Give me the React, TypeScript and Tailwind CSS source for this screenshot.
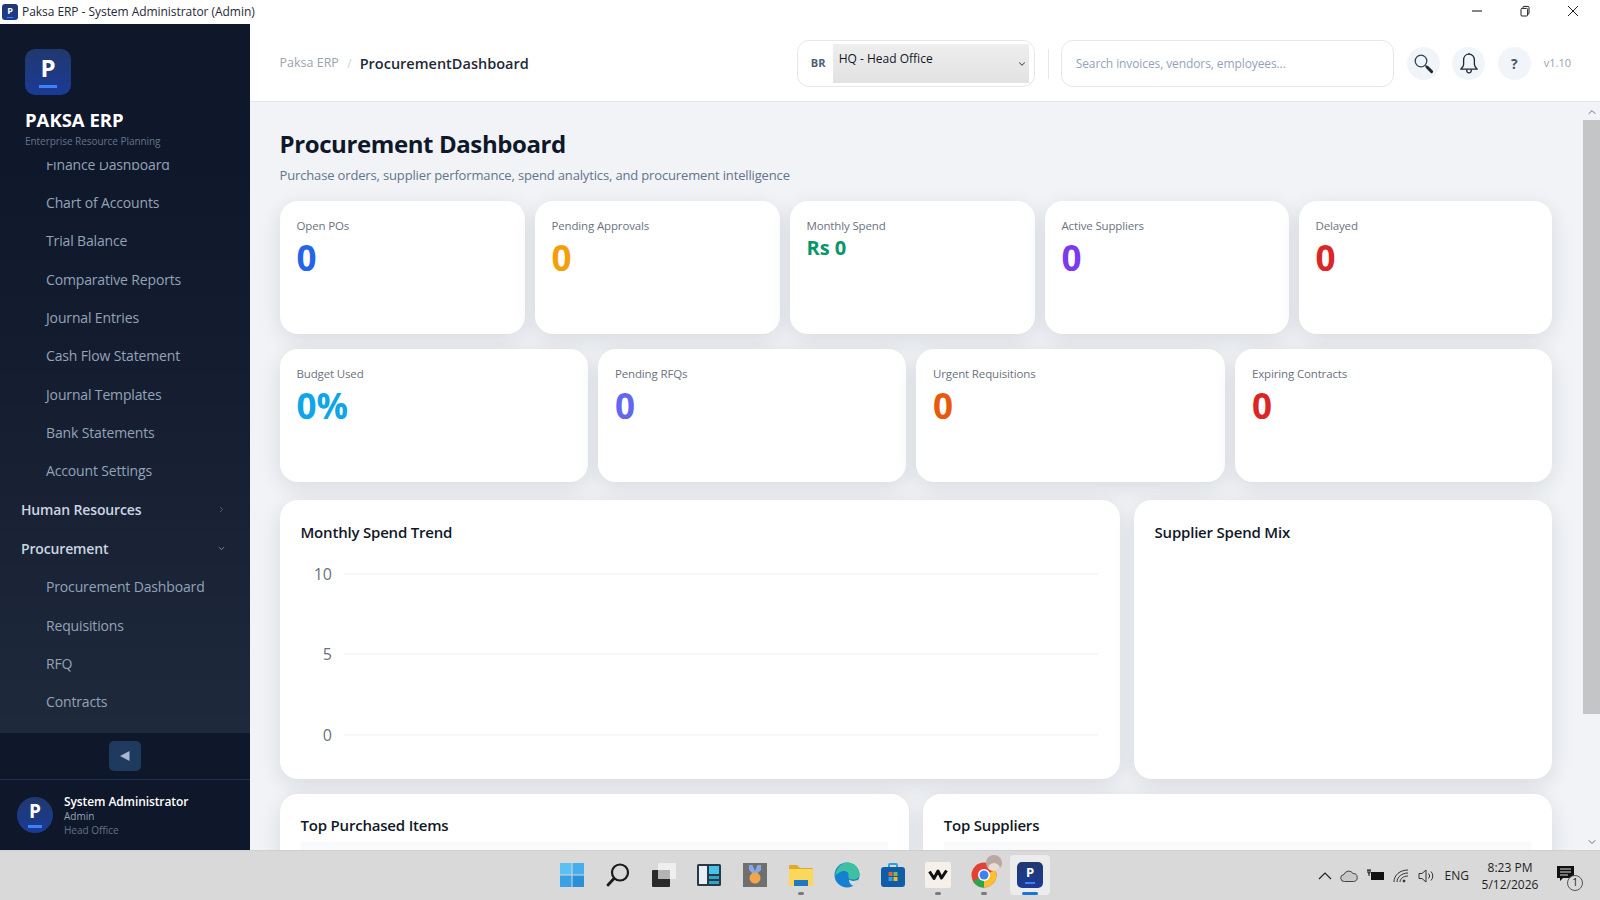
import React from 'react';
import { ChevronDown, ChevronRight, ChevronUp } from 'lucide-react';

interface Kpi {
  label: string;
  value: string;
  color: string;
}

const topKpis: Kpi[] = [
  { label: 'Open POs', value: '0', color: 'text-[#2563eb]' },
  { label: 'Pending Approvals', value: '0', color: 'text-[#f59e0b]' },
  { label: 'Monthly Spend', value: 'Rs 0', color: 'text-[#059669]' },
  { label: 'Active Suppliers', value: '0', color: 'text-[#7c3aed]' },
  { label: 'Delayed', value: '0', color: 'text-[#dc2626]' },
];

const lowerKpis: Kpi[] = [
  { label: 'Budget Used', value: '0%', color: 'text-[#0ea5e9]' },
  { label: 'Pending RFQs', value: '0', color: 'text-[#6366f1]' },
  { label: 'Urgent Requisitions', value: '0', color: 'text-[#ea580c]' },
  { label: 'Expiring Contracts', value: '0', color: 'text-[#dc2626]' },
];

const financeItems = [
  'Finance Dashboard',
  'Chart of Accounts',
  'Trial Balance',
  'Comparative Reports',
  'Journal Entries',
  'Cash Flow Statement',
  'Journal Templates',
  'Bank Statements',
  'Account Settings',
];

const procurementItems = ['Procurement Dashboard', 'Requisitions', 'RFQ', 'Contracts'];

const cardClass = 'rounded-[18px] bg-white shadow-[0_6px_22px_rgba(15,23,42,0.11)]';
const headingClass = 'text-[15px] leading-[24px] font-semibold tracking-[-0.2px] text-[#111827]';

function PaksaMark({ className, text }: { className: string; text: string }) {
  return (
    <div className={`flex flex-col items-center justify-center bg-linear-to-b from-[#21386f] to-[#1b3a96] ${className}`}>
      <span className={`font-bold leading-none text-white ${text}`}>P</span>
      <span className="mt-[10%] h-[7%] w-[38%] bg-[#3b82f6]" />
    </div>
  );
}

function NavItem({ label }: { label: string }) {
  return (
    <div className="flex h-[38.3px] shrink-0 items-center pl-[46px] text-[14px] tracking-[-0.15px] whitespace-nowrap text-[#94a3b8]">
      {label}
    </div>
  );
}

function NavGroup({ label, open }: { label: string; open?: boolean }) {
  return (
    <div className="flex h-[39px] shrink-0 items-center justify-between pr-[24px] pl-[21px] text-[14px] font-semibold tracking-[-0.15px] text-[#cbd5e1]">
      <span>{label}</span>
      {open ? <ChevronDown size={9} className="text-[#94a3b8]" /> : <ChevronRight size={9} className="text-[#64748b]" />}
    </div>
  );
}

function Sidebar() {
  return (
    <aside className="flex w-[250px] shrink-0 flex-col bg-[#0f172a]">
      <div className="shrink-0 pt-[25px] pb-[12px] pl-[25px]">
        <PaksaMark className="h-[46px] w-[46px] rounded-[10px]" text="text-[24px]" />
        <div className="mt-[13px] text-[18.5px] leading-[24px] font-bold text-white">PAKSA ERP</div>
        <div className="h-[18px] text-[10px] leading-[18px] tracking-[-0.05px] text-[#64748b]">Enterprise Resource Planning</div>
      </div>
      <nav className="flex min-h-0 flex-1 flex-col justify-end overflow-hidden bg-linear-to-b from-[#0f172a] to-[#1e293b] pb-[12px]">
        {financeItems.map((item) => (
          <NavItem key={item} label={item} />
        ))}
        <NavGroup label="Human Resources" />
        <NavGroup label="Procurement" open />
        {procurementItems.map((item) => (
          <NavItem key={item} label={item} />
        ))}
      </nav>
      <div className="flex h-[47px] shrink-0 items-center justify-center border-b border-[#1e2f55]">
        <div className="flex h-[30px] w-[32px] items-center justify-center rounded-[5px] bg-[#1e3a5f]">
          <svg width="12" height="12" viewBox="0 0 12 12">
            <path d="M10.5 1v10L1 6z" fill="#a9b8d0" />
          </svg>
        </div>
      </div>
      <div className="flex h-[70px] shrink-0 items-center gap-[11px] pl-[17px]">
        <PaksaMark className="h-9 w-9 rounded-full" text="text-[19px]" />
        <div className="flex flex-col">
          <span className="text-[12px] leading-[15px] font-semibold tracking-[-0.1px] text-white">System Administrator</span>
          <span className="text-[10px] leading-[14px] text-[#94a3b8]">Admin</span>
          <span className="text-[10px] leading-[14px] text-[#64748b]">Head Office</span>
        </div>
      </div>
    </aside>
  );
}

function SearchGlyph() {
  return (
    <svg width="21" height="21" viewBox="0 0 21 21" fill="none">
      <circle cx="8" cy="8" r="5.8" stroke="#374151" strokeWidth="1.3" fill="#eef4f8" />
      <path d="M12.4 12.4l1.4 1.4" stroke="#374151" strokeWidth="1.3" />
      <path d="M14 14l4.6 4.6" stroke="#1f2937" strokeWidth="3" strokeLinecap="round" />
    </svg>
  );
}

function BellGlyph() {
  return (
    <svg width="20" height="23" viewBox="0 0 20 23" fill="none" stroke="#1f2937" strokeWidth="1.3" strokeLinejoin="round">
      <path d="M10 2.2c-3.4 0-5.4 2.6-5.4 6v4.3c0 1.7-1.3 3.2-2.8 4.7h16.4c-1.5-1.5-2.8-3-2.8-4.7V8.2c0-3.4-2-6-5.4-6z" />
      <path d="M10 1v1.2M7.6 17.5c0 1.9 1 3.4 2.4 3.4s2.4-1.5 2.4-3.4" />
    </svg>
  );
}

function TopBar() {
  return (
    <header className="flex h-[78px] shrink-0 items-center border-b border-[#e5e7eb] bg-white pt-[2px] pr-[29px] pl-[29.5px]">
      <span className="text-[12.5px] text-[#9ca3af]">Paksa ERP</span>
      <span className="mx-2 text-[13px] text-[#cbd5e1]">/</span>
      <span className="text-[14.5px] font-semibold text-[#1f2937]">ProcurementDashboard</span>
      <div className="ml-auto flex h-[47px] w-[238px] items-center rounded-xl border border-[#e5e7eb] bg-white pr-[5px] pl-[13px]">
        <span className="w-5 text-[11px] font-bold text-[#4a6078]">BR</span>
        <div className="ml-[2px] flex h-[39px] flex-1 items-start justify-between bg-linear-to-b from-[#eeeeee] to-[#e2e2e2] pr-[2px] pl-[6px]">
          <span className="pt-[6px] text-[12px] text-[#111827]">HQ - Head Office</span>
          <ChevronDown size={10} strokeWidth={2.5} className="mt-[15px] text-[#4b5563]" />
        </div>
      </div>
      <div className="mr-3 ml-[13px] h-[30px] w-px bg-[#e5e7eb]" />
      <div className="flex h-[47px] w-[333px] items-center rounded-xl border border-[#e5e7eb] bg-white pl-[14px] text-[12px] tracking-[-0.1px] text-[#94a3b8]">
        Search invoices, vendors, employees...
      </div>
      <div className="ml-[13px] flex items-center gap-[12.5px]">
        <div className="flex h-[33px] w-[33px] items-center justify-center rounded-full bg-[#f1f5f9]">
          <SearchGlyph />
        </div>
        <div className="flex h-[33px] w-[33px] items-center justify-center rounded-full bg-[#f1f5f9]">
          <BellGlyph />
        </div>
        <div className="flex h-[33px] w-[33px] items-center justify-center rounded-full bg-[#f1f5f9] text-[14px] font-bold text-[#475569]">
          ?
        </div>
      </div>
      <span className="ml-[13px] text-[11px] text-[#94a3b8]">v1.10</span>
    </header>
  );
}

function KpiCard({ kpi }: { kpi: Kpi }) {
  const small = kpi.value.startsWith('Rs');
  return (
    <div className={`${cardClass} h-[133px] px-[17px] pt-[16px]`}>
      <div className="text-[11.5px] leading-[18px] font-medium tracking-[-0.15px] text-[#6b7280]">{kpi.label}</div>
      <div className={small ? `text-[20px] leading-[26px] font-bold ${kpi.color}` : `text-[35px] leading-[46px] font-bold ${kpi.color}`}>
        {kpi.value}
      </div>
    </div>
  );
}

function SpendChart() {
  const ticks = [
    { label: '10', y: 27 },
    { label: '5', y: 107 },
    { label: '0', y: 188 },
  ];
  return (
    <svg width="839" height="215" viewBox="0 0 839 215" className="mt-[3px] block">
      {ticks.map((t) => (
        <g key={t.label}>
          <line x1="64" x2="818" y1={t.y} y2={t.y} stroke="#eef0f2" strokeWidth="1.2" />
          <text x="52" y={t.y + 6} textAnchor="end" fontSize="16" fill="#6b7280">
            {t.label}
          </text>
        </g>
      ))}
    </svg>
  );
}

function Content() {
  return (
    <div className="min-w-0 flex-1 overflow-hidden pr-[31px] pl-[29.5px]">
      <h1 className="mt-[24px] text-[24px] leading-[36px] font-bold tracking-[-0.4px] text-[#0f172a]">Procurement Dashboard</h1>
      <p className="mt-[3px] text-[13px] leading-[20px] tracking-[-0.15px] text-[#64748b]">
        Purchase orders, supplier performance, spend analytics, and procurement intelligence
      </p>
      <div className="mt-4 grid grid-cols-[245px_245px_245px_244px_1fr] gap-[10px]">
        {topKpis.map((kpi) => (
          <KpiCard key={kpi.label} kpi={kpi} />
        ))}
      </div>
      <div className="mt-[15px] grid grid-cols-[308.5px_308px_309px_1fr] gap-[10px]">
        {lowerKpis.map((kpi) => (
          <KpiCard key={kpi.label} kpi={kpi} />
        ))}
      </div>
      <div className="mt-[18px] grid grid-cols-[840px_1fr] gap-[14px]">
        <div className={`${cardClass} h-[279px]`}>
          <h3 className={`px-[21px] pt-[20px] ${headingClass}`}>Monthly Spend Trend</h3>
          <SpendChart />
        </div>
        <div className={`${cardClass} h-[279px]`}>
          <h3 className={`px-[21px] pt-[20px] ${headingClass}`}>Supplier Spend Mix</h3>
        </div>
      </div>
      <div className="mt-[15px] grid grid-cols-2 gap-[14px]">
        {['Top Purchased Items', 'Top Suppliers'].map((title) => (
          <div key={title} className={`${cardClass} h-[200px] px-[21px] pt-[19px]`}>
            <h3 className={headingClass}>{title}</h3>
            <div className="mt-[5px] h-10 bg-[#f8fafc]" />
          </div>
        ))}
      </div>
    </div>
  );
}

function Scrollbar() {
  return (
    <div className="flex w-[17px] shrink-0 flex-col items-center bg-[#f1f3f6]">
      <ChevronUp size={12} className="mt-[3px] h-[14px] shrink-0 text-[#6b7280]" />
      <div className="mt-[1px] h-[594px] w-full bg-[#c4c5c7]" />
      <div className="flex-1" />
      <ChevronDown size={12} className="mb-[1px] h-[14px] shrink-0 text-[#6b7280]" />
    </div>
  );
}

function TitleBar() {
  return (
    <div className="flex h-[24px] shrink-0 items-center bg-white">
      <PaksaMark className="ml-[2px] h-[16px] w-[16px] rounded-[3px]" text="text-[9px]" />
      <span className="ml-[4px] text-[12px] tracking-[-0.05px] text-[#1f2937]">Paksa ERP - System Administrator (Admin)</span>
      <div className="ml-auto flex items-center gap-[36px] pr-[21px] pb-[2px]">
        <svg width="12" height="12" viewBox="0 0 12 12"><path d="M1 6h10" stroke="#222" strokeWidth="1.1" /></svg>
        <svg width="12" height="12" viewBox="0 0 12 12" fill="none">
          <rect x="2" y="3.4" width="6.6" height="7.6" rx="1" stroke="#222" />
          <path d="M4 3.2V2.4a1 1 0 0 1 1-1h4a1 1 0 0 1 1 1v5.8a1 1 0 0 1-1 1h-.4" stroke="#222" />
        </svg>
        <svg width="12" height="12" viewBox="0 0 12 12"><path d="M1 1l10 10M11 1L1 11" stroke="#222" strokeWidth="1" /></svg>
      </div>
    </div>
  );
}

function TaskSlot({ children, dot }: { children: React.ReactNode; dot?: boolean }) {
  return (
    <div className="relative flex h-[40px] w-[40px] items-center justify-center">
      {children}
      {dot && <div className="absolute bottom-0 left-1/2 h-[3px] w-[6px] -translate-x-1/2 rounded-full bg-[#7b7b7b]" />}
    </div>
  );
}

function TaskIcons() {
  return (
    <>
      {/* start */}
      <TaskSlot>
        <svg width="26" height="26" viewBox="0 0 26 26">
          <rect x="1" y="1" width="11.5" height="11.5" fill="#5cc0f2" />
          <rect x="13.5" y="1" width="11.5" height="11.5" fill="#46aeea" />
          <rect x="1" y="13.5" width="11.5" height="11.5" fill="#3aa2e4" />
          <rect x="13.5" y="13.5" width="11.5" height="11.5" fill="#2a90d8" />
        </svg>
      </TaskSlot>
      {/* search */}
      <TaskSlot>
        <svg width="26" height="26" viewBox="0 0 26 26" fill="none">
          <circle cx="15" cy="10.5" r="8" stroke="#1b1b1b" strokeWidth="2.2" />
          <path d="M9 16.5L3 23" stroke="#1b1b1b" strokeWidth="2.8" strokeLinecap="round" />
        </svg>
      </TaskSlot>
      {/* task view */}
      <TaskSlot>
        <svg width="26" height="26" viewBox="0 0 26 26">
          <rect x="7" y="1" width="18" height="16" rx="1" fill="#efefef" />
          <rect x="1" y="8" width="18" height="17" rx="1" fill="#2a2a2a" />
          <rect x="7" y="8" width="12" height="9" fill="#b4b4b4" />
        </svg>
      </TaskSlot>
      {/* widgets */}
      <TaskSlot>
        <svg width="26" height="26" viewBox="0 0 26 26">
          <rect x="1" y="2" width="24" height="22" rx="1.5" fill="#28394a" />
          <rect x="3" y="4" width="8" height="18" fill="#e8eef2" />
          <rect x="13" y="4" width="10" height="8" fill="#45c4ea" />
          <rect x="13" y="14" width="10" height="3" fill="#2fa5c9" />
          <rect x="13" y="19" width="10" height="3" fill="#2fa5c9" />
        </svg>
      </TaskSlot>
      {/* medal */}
      <TaskSlot>
        <svg width="26" height="26" viewBox="0 0 26 26">
          <rect x="1" y="1" width="24" height="24" fill="#6f6f6f" />
          <path d="M7 3h3.5l2.5 6 2.5-6H19v5l-6 6-6-6z" fill="#86a9e6" />
          <circle cx="13" cy="16" r="5.5" fill="#f2a54a" />
        </svg>
      </TaskSlot>
      {/* explorer */}
      <TaskSlot dot>
        <svg width="26" height="26" viewBox="0 0 26 26">
          <path d="M1 4a1 1 0 0 1 1-1h7l3 3h12a1 1 0 0 1 1 1v16a1 1 0 0 1-1 1H2a1 1 0 0 1-1-1z" fill="#e0a92a" />
          <rect x="1" y="7" width="24" height="17" fill="#fbd75a" />
          <rect x="6" y="18" width="14" height="6" fill="#1f78c4" />
        </svg>
      </TaskSlot>
      {/* edge */}
      <TaskSlot>
        <svg width="26" height="26" viewBox="0 0 26 26">
          <circle cx="13" cy="13" r="12.5" fill="#1580cf" />
          <path d="M1 14C2 6 8 .5 13.5 .5 20 .5 25.5 6 25.5 12.5c0 3.5-3 5-6.5 5-3 0-5-1-4.500-3.500C15.500 10 11 8 7.500 9.500 5 10.500 2.500 12 1 14z" fill="#3cc2a0" />
          <path d="M15 17.5c2 1.800 6 2.200 10-.5-.8 3-2.500 5.300-4.500 6.700-3 .3-5.500-2.700-5.500-6.200z" fill="#d9d9d9" />
        </svg>
      </TaskSlot>
      {/* store */}
      <TaskSlot>
        <svg width="26" height="26" viewBox="0 0 26 26">
          <path d="M9 6V3a1 1 0 0 1 1-1h6a1 1 0 0 1 1 1v3" stroke="#2aa0dc" strokeWidth="2" fill="none" />
          <rect x="1" y="5" width="24" height="20" rx="3" fill="#0f5da8" />
          <rect x="8.5" y="10" width="4" height="4" fill="#ef5a3a" />
          <rect x="13.5" y="10" width="4" height="4" fill="#7fbb42" />
          <rect x="8.5" y="15" width="4" height="4" fill="#2ba5e0" />
          <rect x="13.5" y="15" width="4" height="4" fill="#fbb714" />
        </svg>
      </TaskSlot>
      {/* w app */}
      <TaskSlot dot>
        <svg width="26" height="26" viewBox="0 0 26 26">
          <rect width="26" height="26" rx="2" fill="#f5f1ea" />
          <path d="M4.5 9.5l4.5 7 4-7.5 3.5 7 5-7.500" stroke="#111" strokeWidth="3" fill="none" strokeLinejoin="round" />
        </svg>
      </TaskSlot>
      {/* chrome */}
      <TaskSlot dot>
        <div className="relative h-[26px] w-[26px]">
          <svg width="26" height="26" viewBox="0 0 26 26">
            <circle cx="13" cy="13" r="12.5" fill="#e34133" />
            <path d="M13 13L2 19.5A12.5 12.5 0 0 0 13 25.5z" fill="#2fa44f" />
            <path d="M13 13L13 25.5A12.5 12.5 0 0 0 24.5 8z" fill="#fbc02d" />
            <circle cx="13" cy="13" r="6" fill="#fff" />
            <circle cx="13" cy="13" r="4.5" fill="#3b82f0" />
          </svg>
          <div className="absolute -top-[7px] -right-[5px] flex h-[16px] w-[16px] items-end justify-center overflow-hidden rounded-full bg-[#b9a8a4]">
            <div className="h-[8px] w-[12px] rounded-t-full bg-[#e9dcd6]" />
          </div>
        </div>
      </TaskSlot>
      {/* paksa */}
      <div className="relative flex h-[40px] w-[40px] items-center justify-center rounded-[4px] bg-[#ececec]">
        <PaksaMark className="h-[26px] w-[26px] rounded-[5px]" text="text-[13px]" />
        <div className="absolute bottom-0 left-1/2 h-[3px] w-[16px] -translate-x-1/2 rounded-full bg-[#1976d2]" />
      </div>
    </>
  );
}

function Tray() {
  return (
    <div className="flex items-center justify-end gap-[9px] pr-[5px] text-[#1f1f1f]">
      <div className="flex items-center gap-[8.5px]">
        <svg width="14" height="14" viewBox="0 0 14 14" fill="none"><path d="M1 10l6-6 6 6" stroke="#222" strokeWidth="1.2" /></svg>
        <svg width="18" height="14" viewBox="0 0 18 14">
          <path d="M4.5 12.5a3.5 3.5 0 0 1-.5-7A5 5 0 0 1 13 4.5a4 4 0 0 1 .5 8z" fill="#c8c8c8" stroke="#444" strokeWidth="1" />
        </svg>
        <svg width="18" height="14" viewBox="0 0 18 14">
          <rect x="4" y="3" width="13" height="8" fill="#111" />
          <path d="M0 1h4M1 1v3h2V1M2 4v3" stroke="#111" strokeWidth="1" fill="none" />
        </svg>
        <svg width="16" height="16" viewBox="0 0 16 16" fill="none" stroke="#333" strokeWidth="1">
          <path d="M1 14C1 7 7 2 15 2M4 14c0-5 5-9 11-9M7 14c0-3 3-6 8-6" />
          <circle cx="11" cy="13" r="1" fill="#111" />
        </svg>
        <svg width="18" height="16" viewBox="0 0 18 16" fill="none" stroke="#333" strokeWidth="1">
          <path d="M1 5.5h3L8 2v12l-4-3.5H1z" />
          <path d="M10.5 5.5a3.5 3.5 0 0 1 0 5M13 3.5a6.5 6.5 0 0 1 0 9" />
        </svg>
      </div>
      <span className="text-[12px]">ENG</span>
      <div className="flex w-[64px] flex-col items-center text-[12px] leading-[17px]">
        <span>8:23 PM</span>
        <span>5/12/2026</span>
      </div>
      <div className="relative mr-[14px] ml-[6px] h-[24px] w-[24px]">
        <svg width="18" height="18" viewBox="0 0 18 18" className="mt-[1px]">
          <path d="M0 1h17v12H6l-3 3v-3H0z" fill="#111" />
          <path d="M3 4h11M3 7h11M3 10h8" stroke="#ddd" strokeWidth="1" />
        </svg>
        <div className="absolute right-[-2px] bottom-[-3px] flex h-[16px] w-[16px] items-center justify-center rounded-full border border-[#555] bg-[#d9d9d9] text-[10px] text-[#111]">
          1
        </div>
      </div>
    </div>
  );
}

export default function App() {
  return (
    <div className="flex h-[900px] w-[1600px] flex-col overflow-hidden bg-white font-['Open_Sans',sans-serif]">
      <TitleBar />
      <div className="flex min-h-0 flex-1">
        <Sidebar />
        <div className="flex min-w-0 flex-1 flex-col">
          <TopBar />
          <div className="flex min-h-0 flex-1 bg-[#f1f3f6]">
            <Content />
            <Scrollbar />
          </div>
        </div>
      </div>
      <div className="grid h-[50px] shrink-0 grid-cols-[1fr_auto_1fr] items-center border-t border-[#cfcfcf] bg-[#d9d9d9]">
        <div />
        <div className="flex items-center gap-[5.8px] pb-[1px] pl-[2px]">
          <TaskIcons />
        </div>
        <Tray />
      </div>
    </div>
  );
}
